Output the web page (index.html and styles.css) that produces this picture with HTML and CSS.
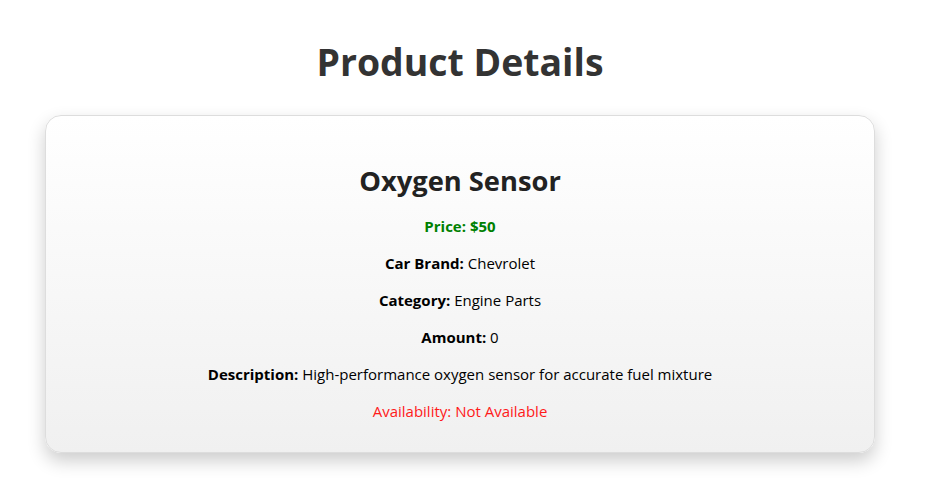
FILE: index.html
```html
<!DOCTYPE html>
<html>
<head>
<meta charset="utf-8">
<title>Product Details</title>
<link rel="stylesheet" href="styles.css">
</head>
<body>
<h1 class="page-title">Product Details</h1>
<div class="card">
  <h2 class="product-name">Oxygen Sensor</h2>
  <p class="price">Price: $50</p>
  <p class="row"><strong>Car Brand:</strong> Chevrolet</p>
  <p class="row"><strong>Category:</strong> Engine Parts</p>
  <p class="row"><strong>Amount:</strong> 0</p>
  <p class="row"><strong>Description:</strong> High-performance oxygen sensor for accurate fuel mixture</p>
  <p class="availability">Availability: Not Available</p>
</div>
</body>
</html>
```
FILE: styles.css
```css
html {
  min-height: 100%;
  background: #fff;
}
body {
  margin: 8px;
  padding-right: 9px;
  padding-bottom: 30px;
  font-family: "Open Sans", "Noto Sans", sans-serif;
  background: #fff;
  color: #000;
}
.page-title {
  font-size: 37.4px;
  line-height: 53px;
  margin: 27px 0;
  text-align: center;
  color: #333;
  font-weight: 700;
}
.card {
  width: 830px;
  box-sizing: border-box;
  margin: 0 auto;
  padding: 16px 20px 14px;
  border: 1px solid #ddd;
  border-radius: 16px;
  background: linear-gradient(#ffffff, #f0f0f0);
  box-shadow: 0 8px 18px rgba(0, 0, 0, 0.2);
  text-align: center;
}
.product-name {
  font-size: 27.3px;
  line-height: 37px;
  margin: 30px 0 17px;
  color: #222;
}
.card p {
  font-size: 15px;
  line-height: 21px;
  margin: 16px 0;
}
.price {
  color: #008000;
  font-weight: 700;
}
.availability {
  color: #ff1a1a;
}
```
